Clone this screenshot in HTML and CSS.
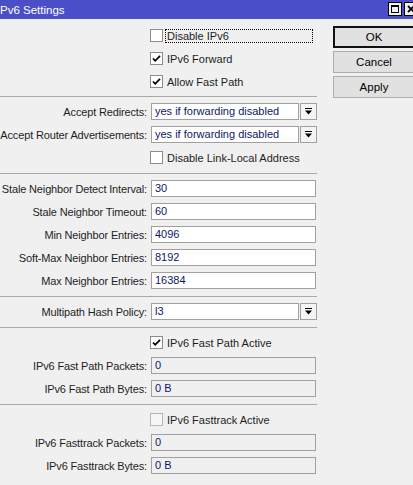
FILE: index.html
```html
<!DOCTYPE html>
<html>
<head>
<meta charset="utf-8">
<link rel="stylesheet" href="styles.css">
</head>
<body>
<div class="window">
  <div class="titlebar">
    <span class="title">Pv6 Settings</span>
    <div class="tb-buttons">
      <span class="tb-btn tb-max"><span class="tb-max-inner"></span></span>
      <span class="tb-btn tb-close"><svg viewBox="0 0 8 8" class="x-icon"><path d="M1 1L7 7M7 1L1 7"/></svg></span>
    </div>
  </div>
  <div class="content">
    <div class="form">
      <section class="group first">
        <div class="row"><span class="cb"></span><span class="cb-label focus">Disable IPv6</span></div>
        <div class="row"><span class="cb"><svg viewBox="0 0 11 11" class="tick"><polyline points="2,5.5 4.2,7.8 9,2.8"/></svg></span><span class="cb-label">IPv6 Forward</span></div>
        <div class="row"><span class="cb"><svg viewBox="0 0 11 11" class="tick"><polyline points="2,5.5 4.2,7.8 9,2.8"/></svg></span><span class="cb-label">Allow Fast Path</span></div>
      </section>
      <section class="group">
        <div class="row"><span class="label">Accept Redirects:</span>
          <div class="combo"><span class="field">yes if forwarding disabled</span><span class="drop"><svg viewBox="0 0 7 7" class="arrow"><rect x="0" y="0" width="7" height="1"/><path d="M0 2.5h7L3.5 6.5z"/></svg></span></div>
        </div>
        <div class="row"><span class="label">Accept Router Advertisements:</span>
          <div class="combo"><span class="field">yes if forwarding disabled</span><span class="drop"><svg viewBox="0 0 7 7" class="arrow"><rect x="0" y="0" width="7" height="1"/><path d="M0 2.5h7L3.5 6.5z"/></svg></span></div>
        </div>
        <div class="row"><span class="cb"></span><span class="cb-label">Disable Link-Local Address</span></div>
      </section>
      <section class="group">
        <div class="row"><span class="label">Stale Neighbor Detect Interval:</span><span class="field wide">30</span></div>
        <div class="row"><span class="label">Stale Neighbor Timeout:</span><span class="field wide">60</span></div>
        <div class="row"><span class="label">Min Neighbor Entries:</span><span class="field wide">4096</span></div>
        <div class="row"><span class="label">Soft-Max Neighbor Entries:</span><span class="field wide">8192</span></div>
        <div class="row"><span class="label">Max Neighbor Entries:</span><span class="field wide">16384</span></div>
      </section>
      <section class="group">
        <div class="row"><span class="label">Multipath Hash Policy:</span>
          <div class="combo"><span class="field">l3</span><span class="drop"><svg viewBox="0 0 7 7" class="arrow"><rect x="0" y="0" width="7" height="1"/><path d="M0 2.5h7L3.5 6.5z"/></svg></span></div>
        </div>
      </section>
      <section class="group">
        <div class="row"><span class="cb"><svg viewBox="0 0 11 11" class="tick"><polyline points="2,5.5 4.2,7.8 9,2.8"/></svg></span><span class="cb-label">IPv6 Fast Path Active</span></div>
        <div class="row"><span class="label">IPv6 Fast Path Packets:</span><span class="field wide ro">0</span></div>
        <div class="row"><span class="label">IPv6 Fast Path Bytes:</span><span class="field wide ro">0 B</span></div>
      </section>
      <section class="group">
        <div class="row"><span class="cb disabled"></span><span class="cb-label">IPv6 Fasttrack Active</span></div>
        <div class="row"><span class="label">IPv6 Fasttrack Packets:</span><span class="field wide ro">0</span></div>
        <div class="row"><span class="label">IPv6 Fasttrack Bytes:</span><span class="field wide ro">0 B</span></div>
      </section>
    </div>
    <div class="actions">
      <button class="btn default">OK</button>
      <button class="btn">Cancel</button>
      <button class="btn">Apply</button>
    </div>
  </div>
</div>
</body>
</html>
```

FILE: styles.css
```css
html, body {
  margin: 0;
  padding: 0;
}
body {
  background: #f0f0f0;
  font-family: "Liberation Sans", Arial, sans-serif;
  font-size: 11px;
  color: #1e1e1e;
  width: 413px;
  height: 485px;
  overflow: hidden;
}
.window {
  width: 413px;
  overflow: hidden;
}
.titlebar {
  height: 19px;
  background: #4a4fc8;
  display: flex;
  align-items: center;
  color: #fff;
}
.title {
  flex: 1;
  font-size: 11.5px;
  white-space: nowrap;
}
.tb-buttons {
  display: flex;
  gap: 2px;
  margin-right: -5px;
  margin-top: -2px;
}
.tb-btn {
  width: 14px;
  height: 14px;
  box-sizing: border-box;
  border: 1px solid #000;
  background: #f0f0f0;
  display: flex;
  align-items: center;
  justify-content: center;
}
.tb-max-inner {
  width: 8px;
  height: 8px;
  box-sizing: border-box;
  border: 1px solid #000;
  border-top-width: 2px;
}
.x-icon {
  width: 8px;
  height: 8px;
  stroke: #000;
  stroke-width: 1.8;
}
.content {
  display: flex;
  align-items: flex-start;
}
.form {
  width: 317px;
  flex: none;
}
.group {
  padding: 3px 0 4px;
  border-top: 1px solid #a9a9a9;
}
.group.first {
  border-top: 0;
  padding: 5px 0 3px;
}
.row {
  height: 23px;
  display: flex;
  align-items: center;
}
.label {
  width: 147px;
  flex: none;
  display: flex;
  justify-content: flex-end;
  white-space: nowrap;
  letter-spacing: -0.15px;
}
.field {
  height: 17px;
  box-sizing: border-box;
  border: 1px solid #a0a0a0;
  background: #fff;
  color: #0d1766;
  padding-left: 3px;
  line-height: 15px;
  white-space: nowrap;
  overflow: hidden;
}
.field.wide {
  margin-left: 4px;
  width: 165px;
}
.field.ro {
  background: #f0f0f0;
}
.combo {
  margin-left: 4px;
  display: flex;
  gap: 1px;
}
.combo .field {
  width: 148px;
}
.drop {
  width: 17px;
  height: 17px;
  box-sizing: border-box;
  border: 1px solid #a0a0a0;
  background: #f4f4f4;
  display: flex;
  align-items: center;
  justify-content: center;
}
.arrow {
  width: 7px;
  height: 7px;
  fill: #000;
}
.cb {
  margin-left: 150px;
  width: 13px;
  height: 13px;
  box-sizing: border-box;
  border: 1px solid #8c8c8c;
  background: #fff;
  display: flex;
  align-items: center;
  justify-content: center;
  flex: none;
}
.cb.disabled {
  border-color: #b5b5b5;
  background: #f7f7f7;
}
.tick {
  width: 11px;
  height: 11px;
  fill: none;
  stroke: #000;
  stroke-width: 1.8;
}
.cb-label {
  margin-left: 4px;
  white-space: nowrap;
}
.cb-label.focus {
  margin-left: 2px;
  width: 148px;
  height: 14px;
  box-sizing: border-box;
  border: 1px dotted #000;
  padding-left: 1px;
  line-height: 12px;
}
.actions {
  margin-left: 16px;
  padding-top: 7px;
  display: flex;
  flex-direction: column;
  gap: 3px;
  flex: none;
}
.btn {
  width: 82px;
  height: 22px;
  box-sizing: border-box;
  border: 1px solid #adadad;
  background: #e1e1e1;
  font-family: inherit;
  font-size: 11.5px;
  color: #000;
  padding: 0;
  margin: 0;
}
.btn.default {
  border: 2px solid #111;
}
```
